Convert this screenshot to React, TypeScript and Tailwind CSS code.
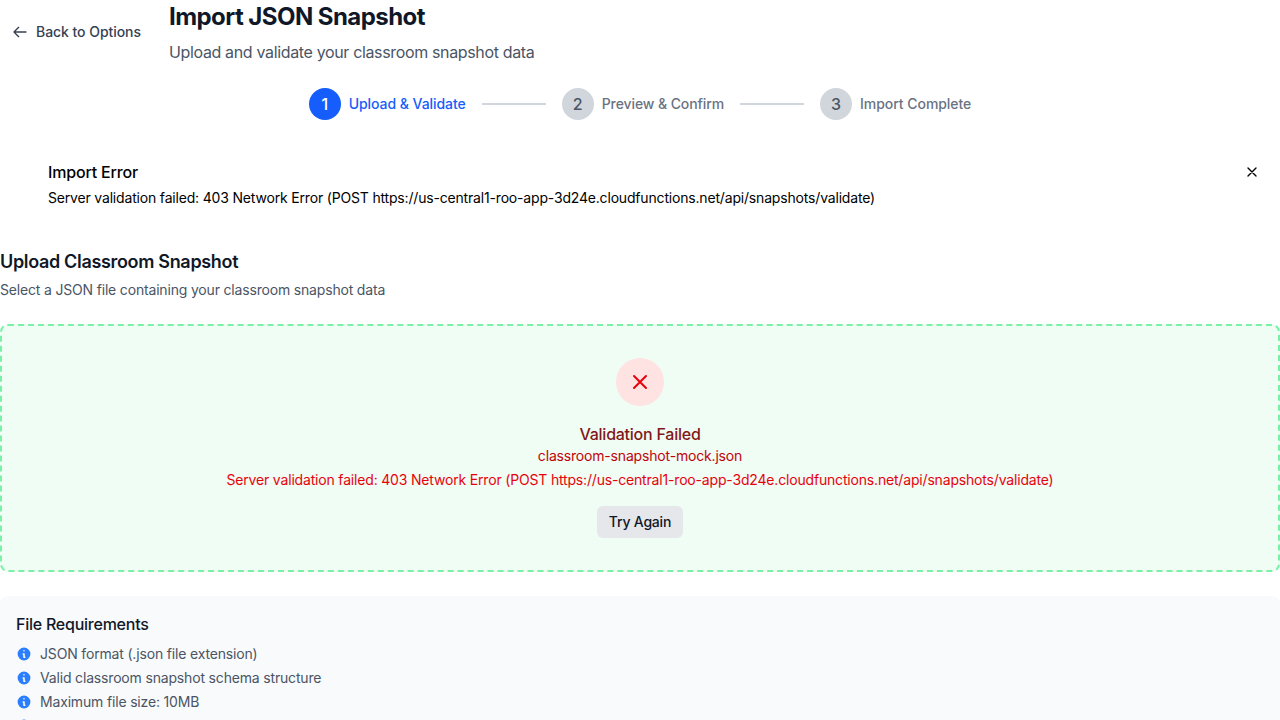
import React from "react";

const steps = [
  { label: "Upload & Validate", tracking: "tracking-[-0.06px]" },
  { label: "Preview & Confirm", tracking: "tracking-[-0.09px]" },
  { label: "Import Complete", tracking: "tracking-[-0.05px]" },
];
const requirements = [
  "JSON format (.json file extension)",
  "Valid classroom snapshot schema structure",
  "Maximum file size: 10MB",
  "",
];
const error =
  "Server validation failed: 403 Network Error (POST https://us-central1-roo-app-3d24e.cloudfunctions.net/api/snapshots/validate)";

function Cross({ className }: { className: string }) {
  return (
    <svg className={className} fill="none" viewBox="0 0 24 24" stroke="currentColor" strokeWidth={2} strokeLinecap="round" strokeLinejoin="round">
      <path d="M6 18L18 6M6 6l12 12" />
    </svg>
  );
}

export default function App() {
  return (
    <div className="h-screen overflow-hidden bg-white font-[Inter,sans-serif] text-black">
      <header className="flex h-16 items-center">
        <button className="flex h-8 items-center px-3 text-sm font-medium tracking-[-0.05px] text-gray-700">
          <svg className="mr-2 h-4 w-4" fill="none" viewBox="0 0 24 24" stroke="currentColor" strokeWidth={2} strokeLinecap="round" strokeLinejoin="round">
            <path d="M10 19l-7-7m0 0l7-7m-7 7h18" />
          </svg>
          Back to Options
        </button>
        <div className="ml-4">
          <h1 className="pt-px text-2xl font-bold tracking-[-0.55px] text-gray-900">Import JSON Snapshot</h1>
          <p className="mt-[7px] tracking-[-0.35px] text-gray-600">Upload and validate your classroom snapshot data</p>
        </div>
      </header>

      <nav className="mt-6 flex items-center justify-center">
        {steps.map((s, i) => (
          <div key={s.label} className="flex items-center">
            {i > 0 && <div className="mx-4 h-0.5 w-16 bg-gray-300" />}
            <div className={i === 0 ? "flex h-8 w-8 items-center justify-center rounded-full bg-blue-600 font-medium text-white" : "flex h-8 w-8 items-center justify-center rounded-full bg-gray-300 font-medium text-gray-600"}>
              {i + 1}
            </div>
            <span className={`ml-2 text-sm font-medium ${s.tracking} ${i === 0 ? "text-blue-600" : "text-gray-500"}`}>{s.label}</span>
          </div>
        ))}
      </nav>

      <section className="mt-6 flex items-start justify-between py-4 pr-5 pl-12">
        <div>
          <h3 className="font-medium tracking-[-0.17px]">Import Error</h3>
          <p className="mt-1 text-sm tracking-[-0.178px]">{error}</p>
        </div>
        <button className="mt-1" aria-label="Dismiss">
          <Cross className="h-4 w-4" />
        </button>
      </section>

      <section className="mt-6">
        <h2 className="text-lg font-semibold tracking-[-0.33px] text-gray-900">Upload Classroom Snapshot</h2>
        <p className="mt-1 text-sm tracking-[-0.178px] text-gray-600">Select a JSON file containing your classroom snapshot data</p>
      </section>

      <section className="mt-6 flex h-62 flex-col items-center rounded-lg border-2 border-dashed border-green-300 bg-green-50 pt-8">
        <div className="flex h-12 w-12 items-center justify-center rounded-full bg-red-100 text-red-600">
          <Cross className="h-6 w-6" />
        </div>
        <p className="mt-4 font-medium tracking-[-0.24px] text-red-900">Validation Failed</p>
        <p className="text-sm tracking-[-0.178px] text-red-700">classroom-snapshot-mock.json</p>
        <p className="mt-1 text-sm tracking-[-0.178px] text-red-600">{error}</p>
        <button className="mt-4 h-8 rounded-md bg-gray-200 px-3 text-sm font-medium tracking-[-0.2px] text-gray-900">Try Again</button>
      </section>

      <section className="mt-6 rounded-lg bg-gray-50 p-4">
        <h4 className="font-medium tracking-[-0.24px] text-gray-900">File Requirements</h4>
        <ul className="mt-2 space-y-1 text-sm tracking-[-0.17px] text-gray-600">
          {requirements.map((r, i) => (
            <li key={i} className="flex h-5 items-center">
              <svg className="mr-2 h-4 w-4 text-blue-500" fill="currentColor" viewBox="0 0 20 20">
                <path fillRule="evenodd" clipRule="evenodd" d="M18 10a8 8 0 11-16 0 8 8 0 0116 0zm-7-4a1 1 0 11-2 0 1 1 0 012 0zM9 9a1 1 0 000 2v3a1 1 0 001 1h1a1 1 0 100-2v-3a1 1 0 00-1-1H9z" />
              </svg>
              {r}
            </li>
          ))}
        </ul>
      </section>
    </div>
  );
}
